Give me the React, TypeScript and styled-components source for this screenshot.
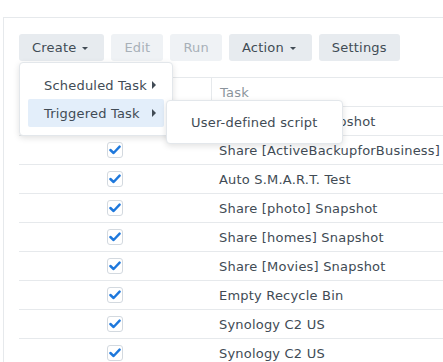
import { Fragment } from 'react';
import styled, { createGlobalStyle } from 'styled-components';

const GlobalStyle = createGlobalStyle`
  html, body {
    margin: 0;
    padding: 0;
    background: #fff;
    overflow: hidden;
  }
  body {
    font-family: "DejaVu Sans", Verdana, sans-serif;
    font-size: 13px;
    letter-spacing: 0.2px;
    color: #414b55;
  }
`;

const Page = styled.div`
  width: 443px;
  height: 362px;
  padding-top: 17px;
  box-sizing: border-box;
  overflow: hidden;
`;

const Panel = styled.div`
  position: relative;
  margin-left: 3px;
  height: 100%;
  border-top: 1px solid #e6e9ec;
  border-left: 1px solid #e6e9ec;
  padding: 16px 0 0 15px;
  box-sizing: border-box;
`;

const Toolbar = styled.div`
  display: flex;
  gap: 7px;
  height: 27px;
  margin-bottom: 16px;
`;

const Button = styled.div<{ $disabled?: boolean }>`
  display: flex;
  align-items: center;
  gap: 6px;
  height: 27px;
  padding: 0 13px;
  border-radius: 3px;
  background: ${(p) => (p.$disabled ? '#eff2f5' : '#e7ebef')};
  color: ${(p) => (p.$disabled ? '#a8b0b8' : '#414b55')};
  white-space: nowrap;
`;

const Caret = styled.span`
  width: 0;
  height: 0;
  border-left: 3px solid transparent;
  border-right: 3px solid transparent;
  border-top: 3px solid #414b55;
  margin: 1px 3px 0 0;
`;

const Table = styled.div`
  display: grid;
  grid-template-columns: 192px 1fr;
`;

const HeadCell = styled.div<{ $divider?: boolean }>`
  height: 28px;
  display: flex;
  align-items: center;
  padding-left: 8px;
  color: #8b949c;
  border-top: 1px solid #e6e9ec;
  border-bottom: 1px solid #e6e9ec;
  border-left: ${(p) => (p.$divider ? '1px solid #e6e9ec' : 'none')};
  white-space: nowrap;
`;

const Cell = styled.div<{ $center?: boolean }>`
  height: 28px;
  display: flex;
  align-items: center;
  justify-content: ${(p) => (p.$center ? 'center' : 'flex-start')};
  padding-left: ${(p) => (p.$center ? '0' : '8px')};
  border-bottom: 1px solid #e6e9ec;
  white-space: nowrap;
  overflow: hidden;
`;

const Check = styled.div`
  width: 14px;
  height: 14px;
  border: 1px solid #d3d9df;
  border-radius: 3px;
  background: #fff;
  display: flex;
  align-items: center;
  justify-content: center;
`;

const Menu = styled.div`
  position: absolute;
  left: 15px;
  top: 44px;
  width: 154px;
  padding: 8px;
  box-sizing: border-box;
  background: #fff;
  border: 1px solid #e3e7eb;
  border-radius: 4px;
  box-shadow: 0 2px 6px rgba(0, 0, 0, 0.12);
`;

const SubMenu = styled(Menu)`
  left: 162px;
  top: 82px;
  width: 177px;
  padding: 7px 8px;
`;

const MenuItem = styled.div<{ $active?: boolean }>`
  display: flex;
  align-items: center;
  justify-content: space-between;
  height: 28px;
  padding: 0 8px 0 16px;
  border-radius: 2px;
  background: ${(p) => (p.$active ? '#e3eefa' : 'transparent')};
  white-space: nowrap;
`;

const Arrow = styled.span`
  width: 0;
  height: 0;
  border-top: 4px solid transparent;
  border-bottom: 4px solid transparent;
  border-left: 4px solid #414b55;
`;

const tasks = [
  'Share [video] Snapshot',
  'Share [ActiveBackupforBusiness] Snapshot',
  'Auto S.M.A.R.T. Test',
  'Share [photo] Snapshot',
  'Share [homes] Snapshot',
  'Share [Movies] Snapshot',
  'Empty Recycle Bin',
  'Synology C2 US',
  'Synology C2 US',
];

function CheckMark() {
  return (
    <svg width="12" height="10" viewBox="0 0 12 10">
      <path
        d="M1.4 5 L4.6 8 L10.6 1.6"
        fill="none"
        stroke="#1e78dc"
        strokeWidth="2.4"
        strokeLinecap="round"
        strokeLinejoin="round"
      />
    </svg>
  );
}

export default function App() {
  return (
    <>
      <GlobalStyle />
      <Page>
        <Panel>
          <Toolbar>
            <Button>
              <span>Create</span>
              <Caret />
            </Button>
            <Button $disabled>Edit</Button>
            <Button $disabled>Run</Button>
            <Button>
              <span>Action</span>
              <Caret />
            </Button>
            <Button>Settings</Button>
          </Toolbar>
          <Table>
            <HeadCell>Enabled</HeadCell>
            <HeadCell $divider>Task</HeadCell>
            {tasks.map((t, i) => (
              <Fragment key={i}>
                <Cell $center>
                  <Check>
                    <CheckMark />
                  </Check>
                </Cell>
                <Cell>{t}</Cell>
              </Fragment>
            ))}
          </Table>
          <Menu>
            <MenuItem>
              <span>Scheduled Task</span>
              <Arrow />
            </MenuItem>
            <MenuItem $active>
              <span>Triggered Task</span>
              <Arrow />
            </MenuItem>
          </Menu>
          <SubMenu>
            <MenuItem>User-defined script</MenuItem>
          </SubMenu>
        </Panel>
      </Page>
    </>
  );
}
